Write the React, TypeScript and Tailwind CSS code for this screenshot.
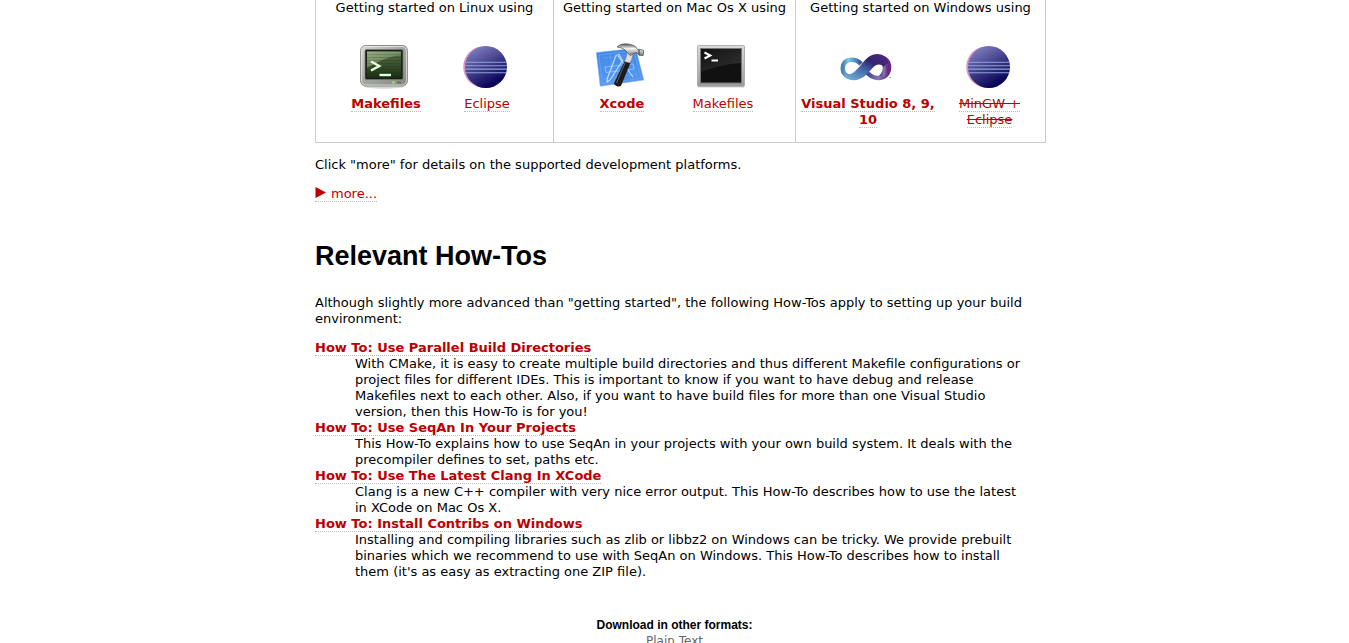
import type { ReactNode } from "react";

function TextLink({ children, bold, strike }: { children: ReactNode; bold?: boolean; strike?: boolean }) {
  return (
    <a
      href="#"
      className={`border-b border-dotted border-[#bbb] text-[#b00] ${bold ? "font-bold" : ""} ${strike ? "line-through" : ""}`}
    >
      {children}
    </a>
  );
}

function LinuxTerminalIcon() {
  return (
    <svg width="48" height="48" viewBox="0 0 48 48" aria-hidden="true">
      <defs>
        <linearGradient id="ltFrame" x1="0" y1="0" x2="1" y2="1">
          <stop offset="0" stopColor="#d8dad5" />
          <stop offset=".5" stopColor="#a3a5a0" />
          <stop offset="1" stopColor="#858782" />
        </linearGradient>
        <linearGradient id="ltScreen" x1="0" y1="0" x2="0" y2="1">
          <stop offset="0" stopColor="#55704a" />
          <stop offset="1" stopColor="#1c3012" />
        </linearGradient>
        <linearGradient id="ltGlare" x1="0" y1="0" x2="1" y2="1">
          <stop offset="0" stopColor="#b3c3a0" stopOpacity=".75" />
          <stop offset="1" stopColor="#7f9d60" stopOpacity=".35" />
        </linearGradient>
      </defs>
      <ellipse cx="24" cy="43.5" rx="20" ry="2.2" fill="#000" opacity=".16" />
      <rect x=".6" y="2.5" width="46.8" height="40.5" rx="5" fill="url(#ltFrame)" stroke="#8c8e89" />
      <rect x="1.6" y="3.5" width="44.8" height="38.5" rx="4.2" fill="none" stroke="#f0f1ee" strokeOpacity=".7" />
      <rect x="5" y="6.5" width="38" height="30" rx="1.5" fill="#1b1f19" stroke="#787a75" strokeWidth=".7" />
      <rect x="7" y="8.5" width="34" height="26" fill="url(#ltScreen)" />
      <path d="M7 8.5h34v4C25 13 14 22 7 25z" fill="url(#ltGlare)" />
      <path d="M7 11.5h34M7 14.5h34M7 17.5h34M7 20.5h34M7 23.5h34M7 26.5h34M7 29.5h34M7 32.5h34" stroke="#172b0d" strokeOpacity=".18" />
      <path d="M11 18.500l8.300 4.500-8.300 4.500" fill="none" stroke="#eaffdf" strokeWidth="2.3" />
      <path d="M19.500 32h11.500" stroke="#dcffda" strokeWidth="2.4" />
      <circle cx="33.5" cy="39.5" r="1.3" fill="#9ae35c" />
      <path d="M37 39.5h4" stroke="#6c6e69" strokeWidth="2" />
    </svg>
  );
}

function EclipseIcon({ id }: { id: string }) {
  return (
    <svg width="48" height="48" viewBox="0 0 48 48" aria-hidden="true">
      <defs>
        <linearGradient id={id} x1=".2" y1="0" x2=".75" y2="1">
          <stop offset="0" stopColor="#8583c4" />
          <stop offset=".5" stopColor="#3d3b85" />
          <stop offset=".9" stopColor="#080258" />
        </linearGradient>
      </defs>
      <circle cx="23" cy="24" r="20.8" fill="#d895c6" />
      <circle cx="25" cy="24" r="21" fill={`url(#${id})`} />
      <path d="M4.5 19.2h41M4 22.7h42M4 26.1h42M4.5 29.7h41" stroke="#91a3dc" strokeWidth="1.1" />
    </svg>
  );
}

function XcodeIcon() {
  return (
    <svg width="48" height="48" viewBox="0 0 48 48" aria-hidden="true">
      <defs>
        <linearGradient id="xcPaper" x1="0" y1="0" x2="0" y2="1">
          <stop offset="0" stopColor="#4088ea" />
          <stop offset="1" stopColor="#5799ef" />
        </linearGradient>
        <linearGradient id="xcMetal" x1="0" y1="0" x2="0" y2="1">
          <stop offset="0" stopColor="#555" />
          <stop offset=".4" stopColor="#f4f4f4" />
          <stop offset="1" stopColor="#777" />
        </linearGradient>
      </defs>
      <path d="M.3 9.5L39.7 5.3l8.1 31.8L4.2 43.2z" fill="url(#xcPaper)" stroke="#7fb0f4" strokeWidth=".5" />
      <path d="M3 12l35-4 7 27.3L6.4 40.6z" fill="none" stroke="#74a8f3" strokeWidth=".6" />
      <path d="M7 15l28-3M7 36l34-5M14 11l5 28M34 10l7 24" stroke="#6ea4f1" strokeWidth=".6" />
      <path d="M9 24l28-3 1 5-28 3.500z" fill="none" stroke="#a3c6f9" strokeWidth=".8" />
      <path d="M20 12.500l3-1 3.500 6L14 37l-3 2 .5-4zM22 13l15 21" fill="none" stroke="#bed8fb" strokeWidth="1.2" />
      <path d="M29 17.500l5.700 1.700L25 42.800c-1.600 1.800-6.900 0-7.100-2.200z" fill="#1b1b1b" />
      <path d="M29.300 19.500L20.500 40" stroke="#626262" strokeWidth="1" />
      <path d="M28.500 18.500c1.800-4 2.500-6.500 2.500-9l6 .5c-.2 4-1.500 6.500-2.800 10z" fill="#dedede" stroke="#777" strokeWidth=".5" />
      <path d="M21 4c4-4 12-4.200 18.500-.4l2 3 2-.4 4.300 1.300-.6 5-4.200-.2-2-2.500c-2.500-.2-4.300.7-6 2.700-2-.7-3-1.800-4-3.200C28.800 5.600 25.500 4.600 21 4z" fill="url(#xcMetal)" stroke="#4e4e4e" strokeWidth=".7" />
      <path d="M43 6.500v5" stroke="#333" strokeWidth="1" />
    </svg>
  );
}

function MacTerminalIcon() {
  return (
    <svg width="48" height="48" viewBox="0 0 48 48" aria-hidden="true">
      <defs>
        <linearGradient id="mtFrame" x1="0" y1="0" x2="0" y2="1">
          <stop offset="0" stopColor="#dadada" />
          <stop offset="1" stopColor="#9b9b9b" />
        </linearGradient>
        <linearGradient id="mtGlare" x1="0" y1="0" x2="1" y2="1">
          <stop offset="0" stopColor="#111" />
          <stop offset="1" stopColor="#333" />
        </linearGradient>
      </defs>
      <path d="M1 44h46" stroke="#000" strokeOpacity=".18" />
      <rect x=".5" y="2.500" width="47" height="41" rx="1" fill="url(#mtFrame)" stroke="#b0b0b0" />
      <rect x="3.500" y="5.500" width="41" height="34.500" fill="#111" stroke="#777" />
      <path d="M4 6h40v14C28 21 13 25 4 29z" fill="url(#mtGlare)" />
      <path d="M7.500 9.500l5.800 3-5.800 3" fill="none" stroke="#fff" strokeWidth="2" />
      <path d="M14.500 17.500h6.500" stroke="#fff" strokeWidth="2" />
    </svg>
  );
}

function VisualStudioIcon() {
  return (
    <svg width="52" height="48" viewBox="0 0 52 48" aria-hidden="true">
      <defs>
        <linearGradient id="vsLeft" x1="0" y1="0" x2="1" y2="0">
          <stop offset="0" stopColor="#4a83ae" />
          <stop offset=".3" stopColor="#80c9e5" />
          <stop offset=".7" stopColor="#4d8bbf" />
          <stop offset="1" stopColor="#414a91" />
        </linearGradient>
        <linearGradient id="vsBand" x1="0" y1="1" x2="1" y2="0">
          <stop offset="0" stopColor="#75bddb" />
          <stop offset=".4" stopColor="#466db0" />
          <stop offset=".65" stopColor="#30266f" />
          <stop offset="1" stopColor="#5a2580" />
        </linearGradient>
        <linearGradient id="vsRight" x1="0" y1="0" x2="1" y2="0">
          <stop offset="0" stopColor="#34387e" />
          <stop offset=".55" stopColor="#8277b5" />
          <stop offset="1" stopColor="#66257f" />
        </linearGradient>
      </defs>
      <path
        d="M21 21C18 17.500 15 16.800 11.500 16.800 6 16.800 2.800 20.500 2.800 25.200S6 34 12 34"
        fill="none"
        stroke="url(#vsLeft)"
        strokeWidth="4.600"
      />
      <path
        d="M25 27C29 32.500 33 35 38 35c7 0 11-4.500 11-10.800 0-6-4-9.700-9.500-9.700"
        fill="none"
        stroke="url(#vsRight)"
        strokeWidth="4.500"
      />
      <path d="M41 18.500c3 5 2 11-2 14l5 1.500c5-5 5-13 0-18z" fill="url(#vsRight)" />
      <path
        d="M4 33.500c6.500 6 15.500 4.300 22-1.500 6.500-6 8-10.500 13-10.500 2 0 3.500.8 4.200 2.500l5.300-4.500C46.500 10.500 35.500 8.500 28.500 14 22 19 17 28.500 11.500 30.500c-2.500 1-4.500.500-6-1z"
        fill="url(#vsBand)"
      />
      <path d="M49.500 34.500h1.500" stroke="#999" />
    </svg>
  );
}

function Tool({ icon, children, wide }: { icon: ReactNode; children: ReactNode; wide?: boolean }) {
  return (
    <div className={`flex flex-col items-center text-center ${wide ? "w-[142px]" : "w-[101px]"}`}>
      <div className="mb-[5px] pr-1">{icon}</div>
      <div className="whitespace-nowrap">{children}</div>
    </div>
  );
}

function Platform({ title, children, shift = "pr-1" }: { title: string; children: ReactNode; shift?: string }) {
  return (
    <section className="border-b border-l border-[#ccc] pb-3.5 last:border-r">
      <h2 className="whitespace-nowrap text-center">{title}</h2>
      <div className={`mt-[27px] flex justify-center ${shift}`}>{children}</div>
    </section>
  );
}

const howTos = [
  {
    title: "How To: Use Parallel Build Directories",
    lines: [
      "With CMake, it is easy to create multiple build directories and thus different Makefile configurations or",
      "project files for different IDEs. This is important to know if you want to have debug and release",
      "Makefiles next to each other. Also, if you want to have build files for more than one Visual Studio",
      "version, then this How-To is for you!",
    ],
  },
  {
    title: "How To: Use SeqAn In Your Projects",
    lines: [
      "This How-To explains how to use SeqAn in your projects with your own build system. It deals with the",
      "precompiler defines to set, paths etc.",
    ],
  },
  {
    title: "How To: Use The Latest Clang In XCode",
    lines: [
      "Clang is a new C++ compiler with very nice error output. This How-To describes how to use the latest",
      "in XCode on Mac Os X.",
    ],
  },
  {
    title: "How To: Install Contribs on Windows",
    lines: [
      "Installing and compiling libraries such as zlib or libbz2 on Windows can be tricky. We provide prebuilt",
      "binaries which we recommend to use with SeqAn on Windows. This How-To describes how to install",
      "them (it's as easy as extracting one ZIP file).",
    ],
  },
];

export default function App() {
  return (
    <div className="min-h-screen bg-white font-['Verdana','DejaVu_Sans',sans-serif] text-[13px] leading-4 text-black">
      <div className="mx-auto max-w-[743px]">
        <main className="pl-3">
          <div className="grid grid-cols-[238fr_242fr_251fr]">
            <Platform title="Getting started on Linux using" shift="pl-1">
              <Tool icon={<LinuxTerminalIcon />}>
                <TextLink bold>Makefiles</TextLink>
              </Tool>
              <Tool icon={<EclipseIcon id="eclipseLinux" />}>
                <TextLink>Eclipse</TextLink>
              </Tool>
            </Platform>
            <Platform title="Getting started on Mac Os X using">
              <Tool icon={<XcodeIcon />}>
                <TextLink bold>Xcode</TextLink>
              </Tool>
              <Tool icon={<MacTerminalIcon />}>
                <TextLink>Makefiles</TextLink>
              </Tool>
            </Platform>
            <Platform title="Getting started on Windows using">
              <Tool wide icon={<VisualStudioIcon />}>
                <TextLink bold>
                  Visual Studio 8, 9,
                  <br />
                  10
                </TextLink>
              </Tool>
              <Tool icon={<EclipseIcon id="eclipseWindows" />}>
                <TextLink strike>
                  MinGW +<br />
                  Eclipse
                </TextLink>
              </Tool>
            </Platform>
          </div>

          <p className="mt-3.5">Click "more" for details on the supported development platforms.</p>
          <p className="mt-[13px]">
            <TextLink>
              <svg className="mr-1 inline-block align-baseline" width="12" height="11" viewBox="0 0 12 11" aria-hidden="true">
                <path d="M.5 0l10.500 5.500L.5 11z" fill="#b00" />
              </svg>
              more...
            </TextLink>
          </p>

          <h1 className="mt-9 font-['Liberation_Sans',Arial,sans-serif] text-[27px] font-bold leading-9">Relevant How-Tos</h1>
          <p className="mt-[21px] whitespace-nowrap">
            Although slightly more advanced than "getting started", the following How-Tos apply to setting up your build
            <br />
            environment:
          </p>

          <dl className="mt-[13px]">
            {howTos.map((item) => (
              <div key={item.title}>
                <dt>
                  <TextLink bold>{item.title}</TextLink>
                </dt>
                <dd className="ml-10 whitespace-nowrap">
                  {item.lines.map((line) => (
                    <span key={line} className="block">
                      {line}
                    </span>
                  ))}
                </dd>
              </div>
            ))}
          </dl>
        </main>

        <footer className="mt-[37px] text-center">
          <h3 className="font-['Liberation_Sans',Arial,sans-serif] text-[12px] font-bold">Download in other formats:</h3>
          <a href="#" className="block text-[12px] text-[#666]">
            Plain Text
          </a>
        </footer>
      </div>
    </div>
  );
}
